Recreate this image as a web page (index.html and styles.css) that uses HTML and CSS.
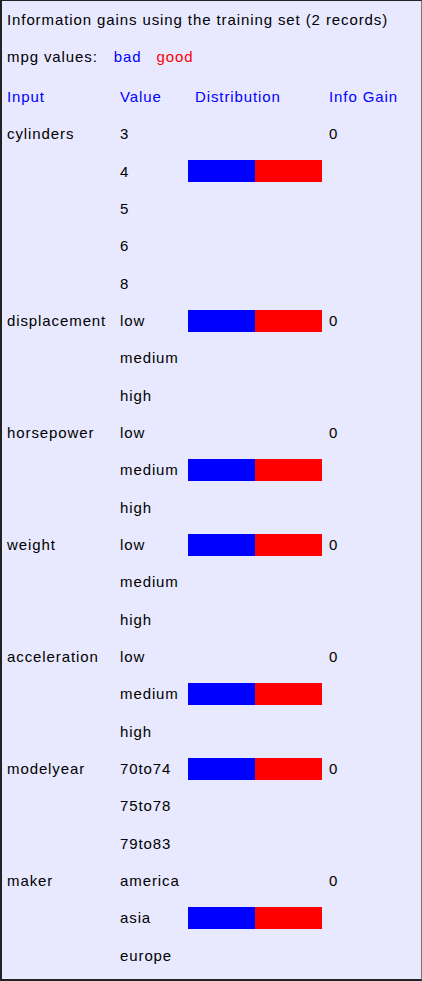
FILE: index.html
```html
<!DOCTYPE html>
<html lang="en">
<head>
  <meta charset="UTF-8" />
  <title>Information gains</title>
  <link rel="stylesheet" href="styles.css">
</head>
<body>
  <div class="panel">
    <div class="title">Information gains using the training set (2 records)</div>
    <div class="legend">
      <span>mpg values:</span>
      <span class="bad">bad</span>
      <span class="good">good</span>
    </div>
    <div class="row head">
      <div>Input</div>
      <div>Value</div>
      <div class="dist-head">Distribution</div>
      <div>Info Gain</div>
    </div>

    <div class="row"><div>cylinders</div><div>3</div><div></div><div>0</div></div>
    <div class="row"><div></div><div>4</div><div class="bar"><span class="b"></span><span class="g"></span></div><div></div></div>
    <div class="row"><div></div><div>5</div><div></div><div></div></div>
    <div class="row"><div></div><div>6</div><div></div><div></div></div>
    <div class="row"><div></div><div>8</div><div></div><div></div></div>

    <div class="row"><div>displacement</div><div>low</div><div class="bar"><span class="b"></span><span class="g"></span></div><div>0</div></div>
    <div class="row"><div></div><div>medium</div><div></div><div></div></div>
    <div class="row"><div></div><div>high</div><div></div><div></div></div>

    <div class="row"><div>horsepower</div><div>low</div><div></div><div>0</div></div>
    <div class="row"><div></div><div>medium</div><div class="bar"><span class="b"></span><span class="g"></span></div><div></div></div>
    <div class="row"><div></div><div>high</div><div></div><div></div></div>

    <div class="row"><div>weight</div><div>low</div><div class="bar"><span class="b"></span><span class="g"></span></div><div>0</div></div>
    <div class="row"><div></div><div>medium</div><div></div><div></div></div>
    <div class="row"><div></div><div>high</div><div></div><div></div></div>

    <div class="row"><div>acceleration</div><div>low</div><div></div><div>0</div></div>
    <div class="row"><div></div><div>medium</div><div class="bar"><span class="b"></span><span class="g"></span></div><div></div></div>
    <div class="row"><div></div><div>high</div><div></div><div></div></div>

    <div class="row"><div>modelyear</div><div>70to74</div><div class="bar"><span class="b"></span><span class="g"></span></div><div>0</div></div>
    <div class="row"><div></div><div>75to78</div><div></div><div></div></div>
    <div class="row"><div></div><div>79to83</div><div></div><div></div></div>

    <div class="row"><div>maker</div><div>america</div><div></div><div>0</div></div>
    <div class="row"><div></div><div>asia</div><div class="bar"><span class="b"></span><span class="g"></span></div><div></div></div>
    <div class="row"><div></div><div>europe</div><div></div><div></div></div>
  </div>
</body>
</html>
```

FILE: styles.css
```css
html, body {
  margin: 0;
  padding: 0;
}
body {
  font-family: "Liberation Sans", Arial, sans-serif;
  font-size: 15px;
  letter-spacing: 0.9px;
  color: #000;
  background: #fff;
}
.panel {
  box-sizing: border-box;
  width: 422px;
  height: 981px;
  background: #e8e8ff;
  border-top: 1px solid #222;
  border-left: 2px solid #222;
  border-bottom: 2px solid #222;
  border-right: 1px solid #777;
  padding: 0 0 0 5px;
}
.title {
  height: 37px;
  line-height: 37px;
}
.legend {
  height: 40px;
  line-height: 38px;
  display: flex;
}
.legend .bad {
  color: #0000ff;
  margin-left: 16px;
}
.legend .good {
  color: #ff0000;
  margin-left: 15px;
}
.row {
  display: grid;
  grid-template-columns: 113px 68px 141px 1fr;
  align-items: center;
  height: 37.33px;
}
.head {
  color: #0000ff;
}
.dist-head {
  padding-left: 7px;
}
.bar {
  display: flex;
  width: 134px;
  height: 22px;
}
.bar .b {
  flex: 1;
  background: #0000ff;
}
.bar .g {
  flex: 1;
  background: #ff0000;
}
```
